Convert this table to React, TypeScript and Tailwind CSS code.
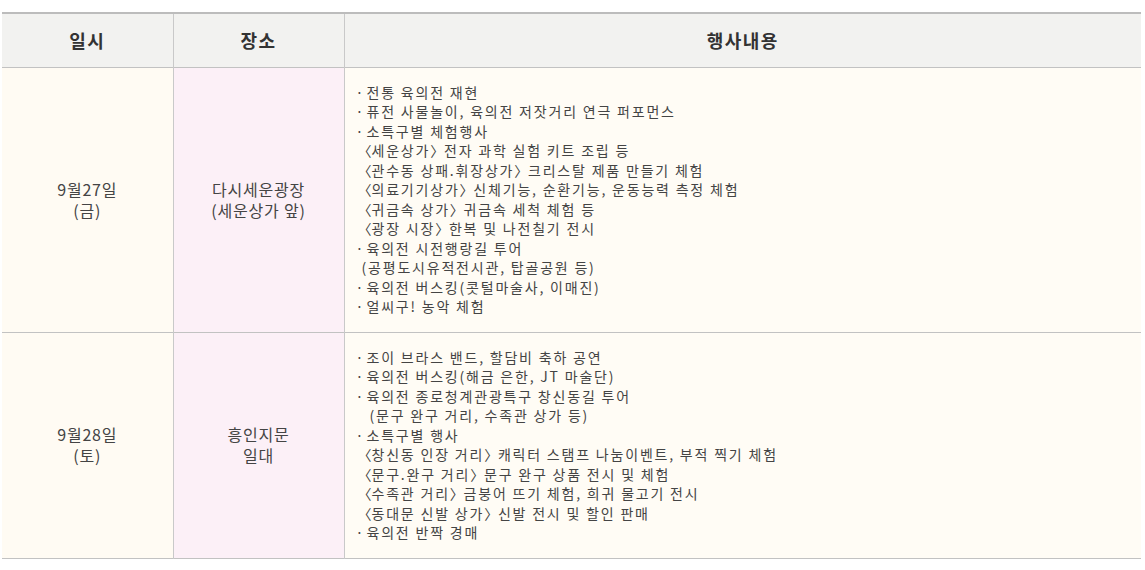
import { Fragment } from 'react'

type Line = { text: string; kind: 'bullet' | 'sub' | 'sub2' }

interface ScheduleRow {
  date: string[]
  place: string[]
  lines: Line[]
}

const b = (text: string): Line => ({ text, kind: 'bullet' })
const s = (text: string): Line => ({ text, kind: 'sub' })

const rows: ScheduleRow[] = [
  {
    date: ['9월27일', '(금)'],
    place: ['다시세운광장', '(세운상가 앞)'],
    lines: [
      b('전통 육의전 재현'),
      b('퓨전 사물놀이, 육의전 저잣거리 연극 퍼포먼스'),
      b('소특구별 체험행사'),
      s('〈세운상가〉 전자 과학 실험 키트 조립 등'),
      s('〈관수동 상패.휘장상가〉 크리스탈 제품 만들기 체험'),
      s('〈의료기기상가〉 신체기능, 순환기능, 운동능력 측정 체험'),
      s('〈귀금속 상가〉 귀금속 세척 체험 등'),
      s('〈광장 시장〉 한복 및 나전칠기 전시'),
      b('육의전 시전행랑길 투어'),
      s('(공평도시유적전시관, 탑골공원 등)'),
      b('육의전 버스킹(콧털마술사, 이매진)'),
      b('얼씨구! 농악 체험'),
    ],
  },
  {
    date: ['9월28일', '(토)'],
    place: ['흥인지문', '일대'],
    lines: [
      b('조이 브라스 밴드, 할담비 축하 공연'),
      b('육의전 버스킹(해금 은한, JT 마술단)'),
      b('육의전 종로청계관광특구 창신동길 투어'),
      { text: '(문구 완구 거리, 수족관 상가 등)', kind: 'sub2' },
      b('소특구별 행사'),
      s('〈창신동 인장 거리〉 캐릭터 스탬프 나눔이벤트, 부적 찍기 체험'),
      s('〈문구.완구 거리〉 문구 완구 상품 전시 및 체험'),
      s('〈수족관 거리〉 금붕어 뜨기 체험, 희귀 물고기 전시'),
      s('〈동대문 신발 상가〉 신발 전시 및 할인 판매'),
      b('육의전 반짝 경매'),
    ],
  },
]

// brackets are drawn half-width, hugging the word they wrap
function withBrackets(text: string) {
  return text.split(/([〈〉])/).map((part, i) =>
    part === '〈' ? (
      <span key={i} className="ml-[3px] tracking-normal [font-feature-settings:'halt']">
        {part}
      </span>
    ) : part === '〉' ? (
      <span key={i} className="[font-feature-settings:'halt']">
        {part}
      </span>
    ) : (
      <Fragment key={i}>{part}</Fragment>
    ),
  )
}

function Cell({ lines, className }: { lines: string[]; className: string }) {
  return (
    <td
      className={`border-r border-[#c9c9c9] text-center align-middle text-[16px] leading-[21px] tracking-[0.8px] text-[#444] ${className}`}
    >
      {lines.map((l) => (
        <div key={l}>{l}</div>
      ))}
    </td>
  )
}

export default function App() {
  return (
    <div
      className="bg-white pt-[12px] pl-[2px] pr-[4px]"
      style={{ fontFamily: '"Noto Sans CJK KR", "Noto Sans", sans-serif' }}
    >
      <table className="w-[1139px] table-fixed border-collapse border-t-2 border-[#bcbcbc]">
        <colgroup>
          <col className="w-[171px]" />
          <col className="w-[171px]" />
          <col />
        </colgroup>
        <thead>
          <tr className="h-[54px] border-b border-[#c2c2c2] bg-[#f2f2f0] text-[18px] font-bold tracking-[1.5px] text-[#333]">
            <th className="border-r border-[#c9c9c9]">일시</th>
            <th className="border-r border-[#c9c9c9]">장소</th>
            <th>행사내용</th>
          </tr>
        </thead>
        <tbody>
          {rows.map((row) => (
            <tr key={row.date[0]} className="border-b border-[#c2c2c2]">
              <Cell lines={row.date} className="bg-[#fffbf3]" />
              <Cell lines={row.place} className="bg-[#fcf0f7]" />
              <td className="bg-[#fffcf5] py-[15px] pl-[11px] text-[14px] leading-[19.5px] tracking-[1.8px] text-[#444]">
                {row.lines.map((l) => (
                  <div
                    key={l.text}
                    className={l.kind === 'sub' ? 'pl-[6px]' : l.kind === 'sub2' ? 'pl-[14px]' : ''}
                  >
                    {l.kind === 'bullet' && <span className="tracking-normal">· </span>}
                    {withBrackets(l.text)}
                  </div>
                ))}
              </td>
            </tr>
          ))}
        </tbody>
      </table>
    </div>
  )
}
